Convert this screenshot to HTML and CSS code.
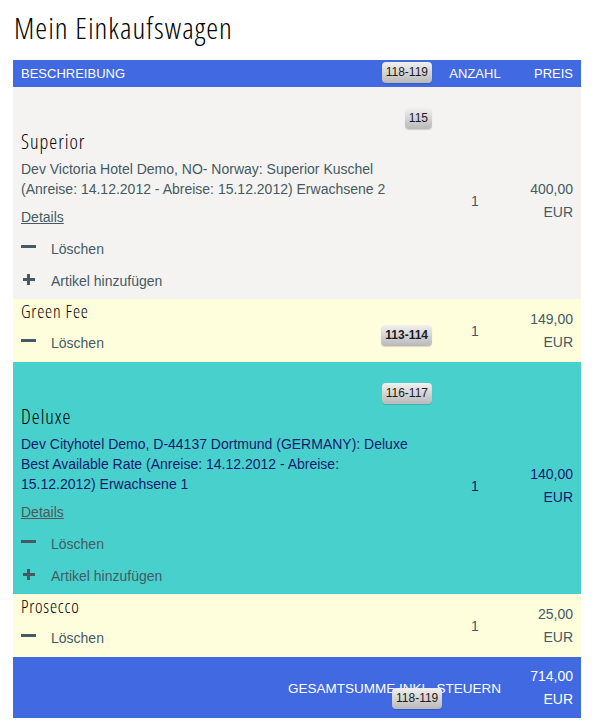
FILE: index.html
```html
<!DOCTYPE html>
<html lang="de">
<head>
<meta charset="utf-8">
<title>Mein Einkaufswagen</title>
<link rel="stylesheet" href="styles.css">
</head>
<body>
<h1 class="title">Mein Einkaufswagen</h1>
<table class="cart">
  <thead>
    <tr class="head">
      <th class="c-desc">BESCHREIBUNG<span class="badge badge-head">118-119</span></th>
      <th class="c-qty">ANZAHL</th>
      <th class="c-price">PREIS</th>
    </tr>
  </thead>
  <tbody>
    <tr class="row row-grey">
      <td class="c-desc">
        <div class="badge-line"><span class="badge badge-small">115</span></div>
        <h2 class="item-title">Superior</h2>
        <p class="item-text">Dev Victoria Hotel Demo, NO- Norway: Superior Kuschel (Anreise: 14.12.2012 - Abreise: 15.12.2012) Erwachsene 2</p>
        <a class="details" href="#">Details</a>
        <div class="action"><span class="ico-minus"></span>Löschen</div>
        <div class="action"><span class="ico-plus"></span>Artikel hinzufügen</div>
      </td>
      <td class="c-qty shift">1</td>
      <td class="c-price shift">400,00<br>EUR</td>
    </tr>
    <tr class="row row-yellow">
      <td class="c-desc sub">
        <h3 class="item-sub">Green Fee</h3>
        <div class="action"><span class="ico-minus"></span>Löschen</div>
        <span class="badge badge-green">113-114</span>
      </td>
      <td class="c-qty">1</td>
      <td class="c-price">149,00<br>EUR</td>
    </tr>
    <tr class="row row-turq">
      <td class="c-desc">
        <div class="badge-line"><span class="badge">116-117</span></div>
        <h2 class="item-title">Deluxe</h2>
        <p class="item-text">Dev Cityhotel Demo, D-44137 Dortmund (GERMANY): Deluxe Best Available Rate (Anreise: 14.12.2012 - Abreise: 15.12.2012) Erwachsene 1</p>
        <a class="details" href="#">Details</a>
        <div class="action"><span class="ico-minus"></span>Löschen</div>
        <div class="action"><span class="ico-plus"></span>Artikel hinzufügen</div>
      </td>
      <td class="c-qty shift">1</td>
      <td class="c-price shift">140,00<br>EUR</td>
    </tr>
    <tr class="row row-yellow">
      <td class="c-desc sub">
        <h3 class="item-sub">Prosecco</h3>
        <div class="action"><span class="ico-minus"></span>Löschen</div>
      </td>
      <td class="c-qty">1</td>
      <td class="c-price">25,00<br>EUR</td>
    </tr>
  </tbody>
  <tfoot>
    <tr class="foot">
      <td class="c-total" colspan="2">GESAMTSUMME INKL. STEUERN<span class="badge badge-foot">118-119</span></td>
      <td class="c-price">714,00<br>EUR</td>
    </tr>
  </tfoot>
</table>
</body>
</html>
```
FILE: styles.css
```css
html, body {
  margin: 0;
  padding: 0;
  background: #ffffff;
}
body {
  padding: 0 14px 0 13px;
  font-family: "Liberation Sans", Arial, sans-serif;
  font-size: 14px;
  color: #455a64;
}
.title {
  margin: 0;
  padding: 11px 0 0 1px;
  height: 48px;
  box-sizing: border-box;
  font-family: "Open Sans", sans-serif;
  font-stretch: 75%;
  font-weight: 300;
  font-size: 30px;
  letter-spacing: 1px;
  line-height: 34px;
  color: #000;
}
.cart {
  width: 568px;
  border-collapse: collapse;
  border-spacing: 0;
  margin-top: 12px;
}
.cart td, .cart th {
  padding: 0 8px;
}
.c-desc { width: 412px; position: relative; }
.c-qty { width: 52px; text-align: center; }
.c-price { width: 56px; text-align: right; line-height: 23px; }
.head {
  background: #4169e1;
  color: #fff;
  height: 27px;
}
.head th {
  font-weight: 400;
  font-size: 13px;
  text-align: left;
}
.head th.c-qty { text-align: center; }
.head th.c-price { text-align: right; }
.row td { vertical-align: middle; }
.row-grey { background: #f4f3f1; }
.row-yellow { background: #fefedc; }
.row-turq { background: #48d1cc; }
.row-turq .item-text, .row-turq .c-qty, .row-turq .c-price { color: #191970; }
.row-turq .details { color: #555; }
.shift { padding-top: 16px !important; }
.row .c-desc { padding-bottom: 8px; }
.row .c-desc.sub { padding-bottom: 9px; }
.badge-line {
  height: 22px;
  padding-top: 21px;
  text-align: right;
  padding-right: 1px;
}
.badge {
  display: inline-block;
  height: 21px;
  line-height: 21px;
  padding: 0 4px;
  border-radius: 4px;
  background: linear-gradient(#f0f0f0, #b9b9b9);
  color: #1c1c1c;
  font-size: 12px;
  font-family: "Liberation Sans", Arial, sans-serif;
  box-shadow: 0 1px 1px rgba(0,0,0,0.15);
}
.badge-head, .badge-green, .badge-foot {
  position: absolute;
}
.badge-head { right: 9px; top: 2px; }
.badge-green { right: 9px; top: 26px; font-weight: 700; }
.badge-foot { left: 379px; top: 31px; }
.item-title {
  margin: 0;
  font-family: "Open Sans", sans-serif;
  font-stretch: 75%;
  font-weight: 300;
  font-size: 20px;
  letter-spacing: 1px;
  line-height: 24px;
  color: #000;
}
.item-sub {
  margin: 0;
  padding-top: 1px;
  font-family: "Open Sans", sans-serif;
  font-stretch: 75%;
  font-weight: 300;
  font-size: 18px;
  letter-spacing: 0.8px;
  line-height: 22px;
  color: #000;
}
.item-text {
  margin: 5px 20px 8px 0;
  line-height: 20px;
}
.details {
  display: block;
  line-height: 20px;
  color: #455a64;
  text-decoration: underline;
}
.action {
  display: flex;
  align-items: center;
  height: 20px;
  margin-top: 12px;
}
.item-sub + .action { margin-top: 11px; }
.ico-minus, .ico-plus {
  position: relative;
  width: 15px;
  height: 14px;
  margin: 0 15px 0 0;
  flex: none;
}
.ico-minus::before, .ico-plus::before, .ico-plus::after {
  content: "";
  position: absolute;
  background: #455a64;
}
.ico-minus::before { left: 0; top: 3px; width: 15px; height: 3px; }
.ico-plus::before { left: 2px; top: 4px; width: 12px; height: 3px; }
.ico-plus::after { left: 6px; top: 0; width: 3px; height: 11px; }
.foot {
  background: #4169e1;
  color: #fff;
  height: 61px;
}
.foot td { vertical-align: middle; }
.c-total {
  position: relative;
  text-align: right;
  font-size: 13.5px;
  padding-top: 1px !important;
}
.foot .c-price { color: #fff; }
```
